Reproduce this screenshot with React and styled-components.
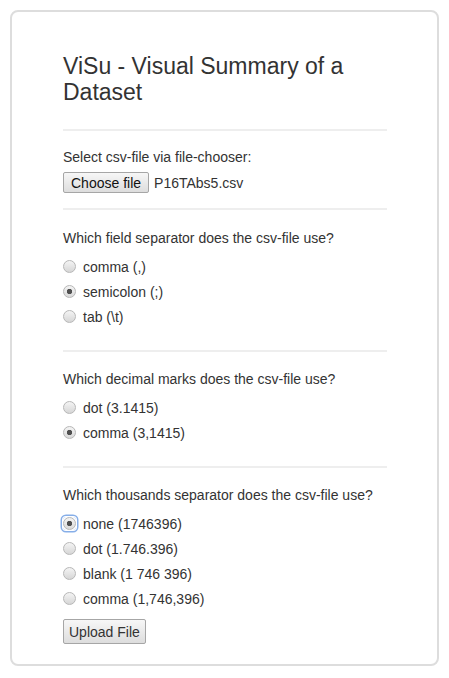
import React from 'react'
import styled, { createGlobalStyle } from 'styled-components'

const GlobalStyle = createGlobalStyle`
  body {
    margin: 0;
    background: #fff;
    font-family: "Liberation Sans", Arial, sans-serif;
    font-size: 14px;
    line-height: 20px;
    color: #333;
  }
`

const Card = styled.div`
  box-sizing: border-box;
  width: 429px;
  margin: 10px;
  border: 2px solid #dddddd;
  border-radius: 8px;
  padding: 41px 50px 20px 51px;
`

const Title = styled.h1`
  margin: 0;
  font-size: 23px;
  font-weight: 400;
  line-height: 26px;
  color: #333;
`

const Divider = styled.hr`
  margin: ${p => p.top || 0}px 0 0;
  border: 0;
  border-top: 2px solid #eeeeee;
`

const Section = styled.div`
  padding: ${p => p.top}px 0 ${p => p.bottom}px;
`

const Question = styled.div`
  color: #333;
`

const FileRow = styled.div`
  display: flex;
  align-items: center;
  margin-top: 5px;
`

const Button = styled.button`
  box-sizing: border-box;
  height: ${p => (p.big ? 25 : 21)}px;
  padding: 0 ${p => (p.big ? 5 : 7)}px;
  border: 1px solid #a6a6a6;
  border-radius: 2px;
  background: linear-gradient(#f7f7f7, #dddddd);
  font-family: "Liberation Sans", Arial, sans-serif;
  font-size: 14px;
  color: ${p => (p.big ? '#333' : '#111')};
  margin-top: ${p => p.mt || 0}px;
`

const FileName = styled.span`
  margin-left: 5px;
  color: #333;
`

const Group = styled.div`
  margin-top: 6px;
`

const Option = styled.label`
  display: flex;
  align-items: center;
  height: 25px;
  gap: 7px;
  color: #333;
`

const RadioBox = styled.span`
  display: inline-flex;
  border-radius: 3px;
  box-shadow: ${p => (p.focus ? '0 0 0 1px #fff, 0 0 0 2.5px #86aee8' : 'none')};
`

const Radio = styled.input`
  appearance: none;
  box-sizing: border-box;
  width: 13px;
  height: 13px;
  margin: 0;
  border-radius: 50%;
  border: 1px solid #b7b7b7;
  background: ${p =>
    p.defaultChecked
      ? 'radial-gradient(circle, #505050 0 2.4px, transparent 3px), linear-gradient(#f4f4f4, #d9d9d9)'
      : 'linear-gradient(#f4f4f4, #d6d6d6)'};
`

const RadioOption = ({ name, label, checked, focus }) => (
  <Option>
    <RadioBox focus={focus}>
      <Radio type="radio" name={name} defaultChecked={checked} />
    </RadioBox>
    {label}
  </Option>
)

export default function App() {
  return (
    <>
      <GlobalStyle />
      <Card>
        <Title>ViSu - Visual Summary of a Dataset</Title>
        <Divider top={24} />
        <Section top={16} bottom={15}>
          <Question>Select csv-file via file-chooser:</Question>
          <FileRow>
            <Button>Choose file</Button>
            <FileName>P16TAbs5.csv</FileName>
          </FileRow>
        </Section>
        <Divider />
        <Section top={18} bottom={21}>
          <Question>Which field separator does the csv-file use?</Question>
          <Group>
            <RadioOption name="sep" label="comma (,)" />
            <RadioOption name="sep" label="semicolon (;)" checked />
            <RadioOption name="sep" label="tab (\t)" />
          </Group>
        </Section>
        <Divider />
        <Section top={17} bottom={21}>
          <Question>Which decimal marks does the csv-file use?</Question>
          <Group>
            <RadioOption name="dec" label="dot (3.1415)" />
            <RadioOption name="dec" label="comma (3,1415)" checked />
          </Group>
        </Section>
        <Divider />
        <Section top={17} bottom={0}>
          <Question>Which thousands separator does the csv-file use?</Question>
          <Group>
            <RadioOption name="th" label="none (1746396)" checked focus />
            <RadioOption name="th" label="dot (1.746.396)" />
            <RadioOption name="th" label="blank (1 746 396)" />
            <RadioOption name="th" label="comma (1,746,396)" />
          </Group>
          <Button big mt={8}>Upload File</Button>
        </Section>
      </Card>
    </>
  )
}
